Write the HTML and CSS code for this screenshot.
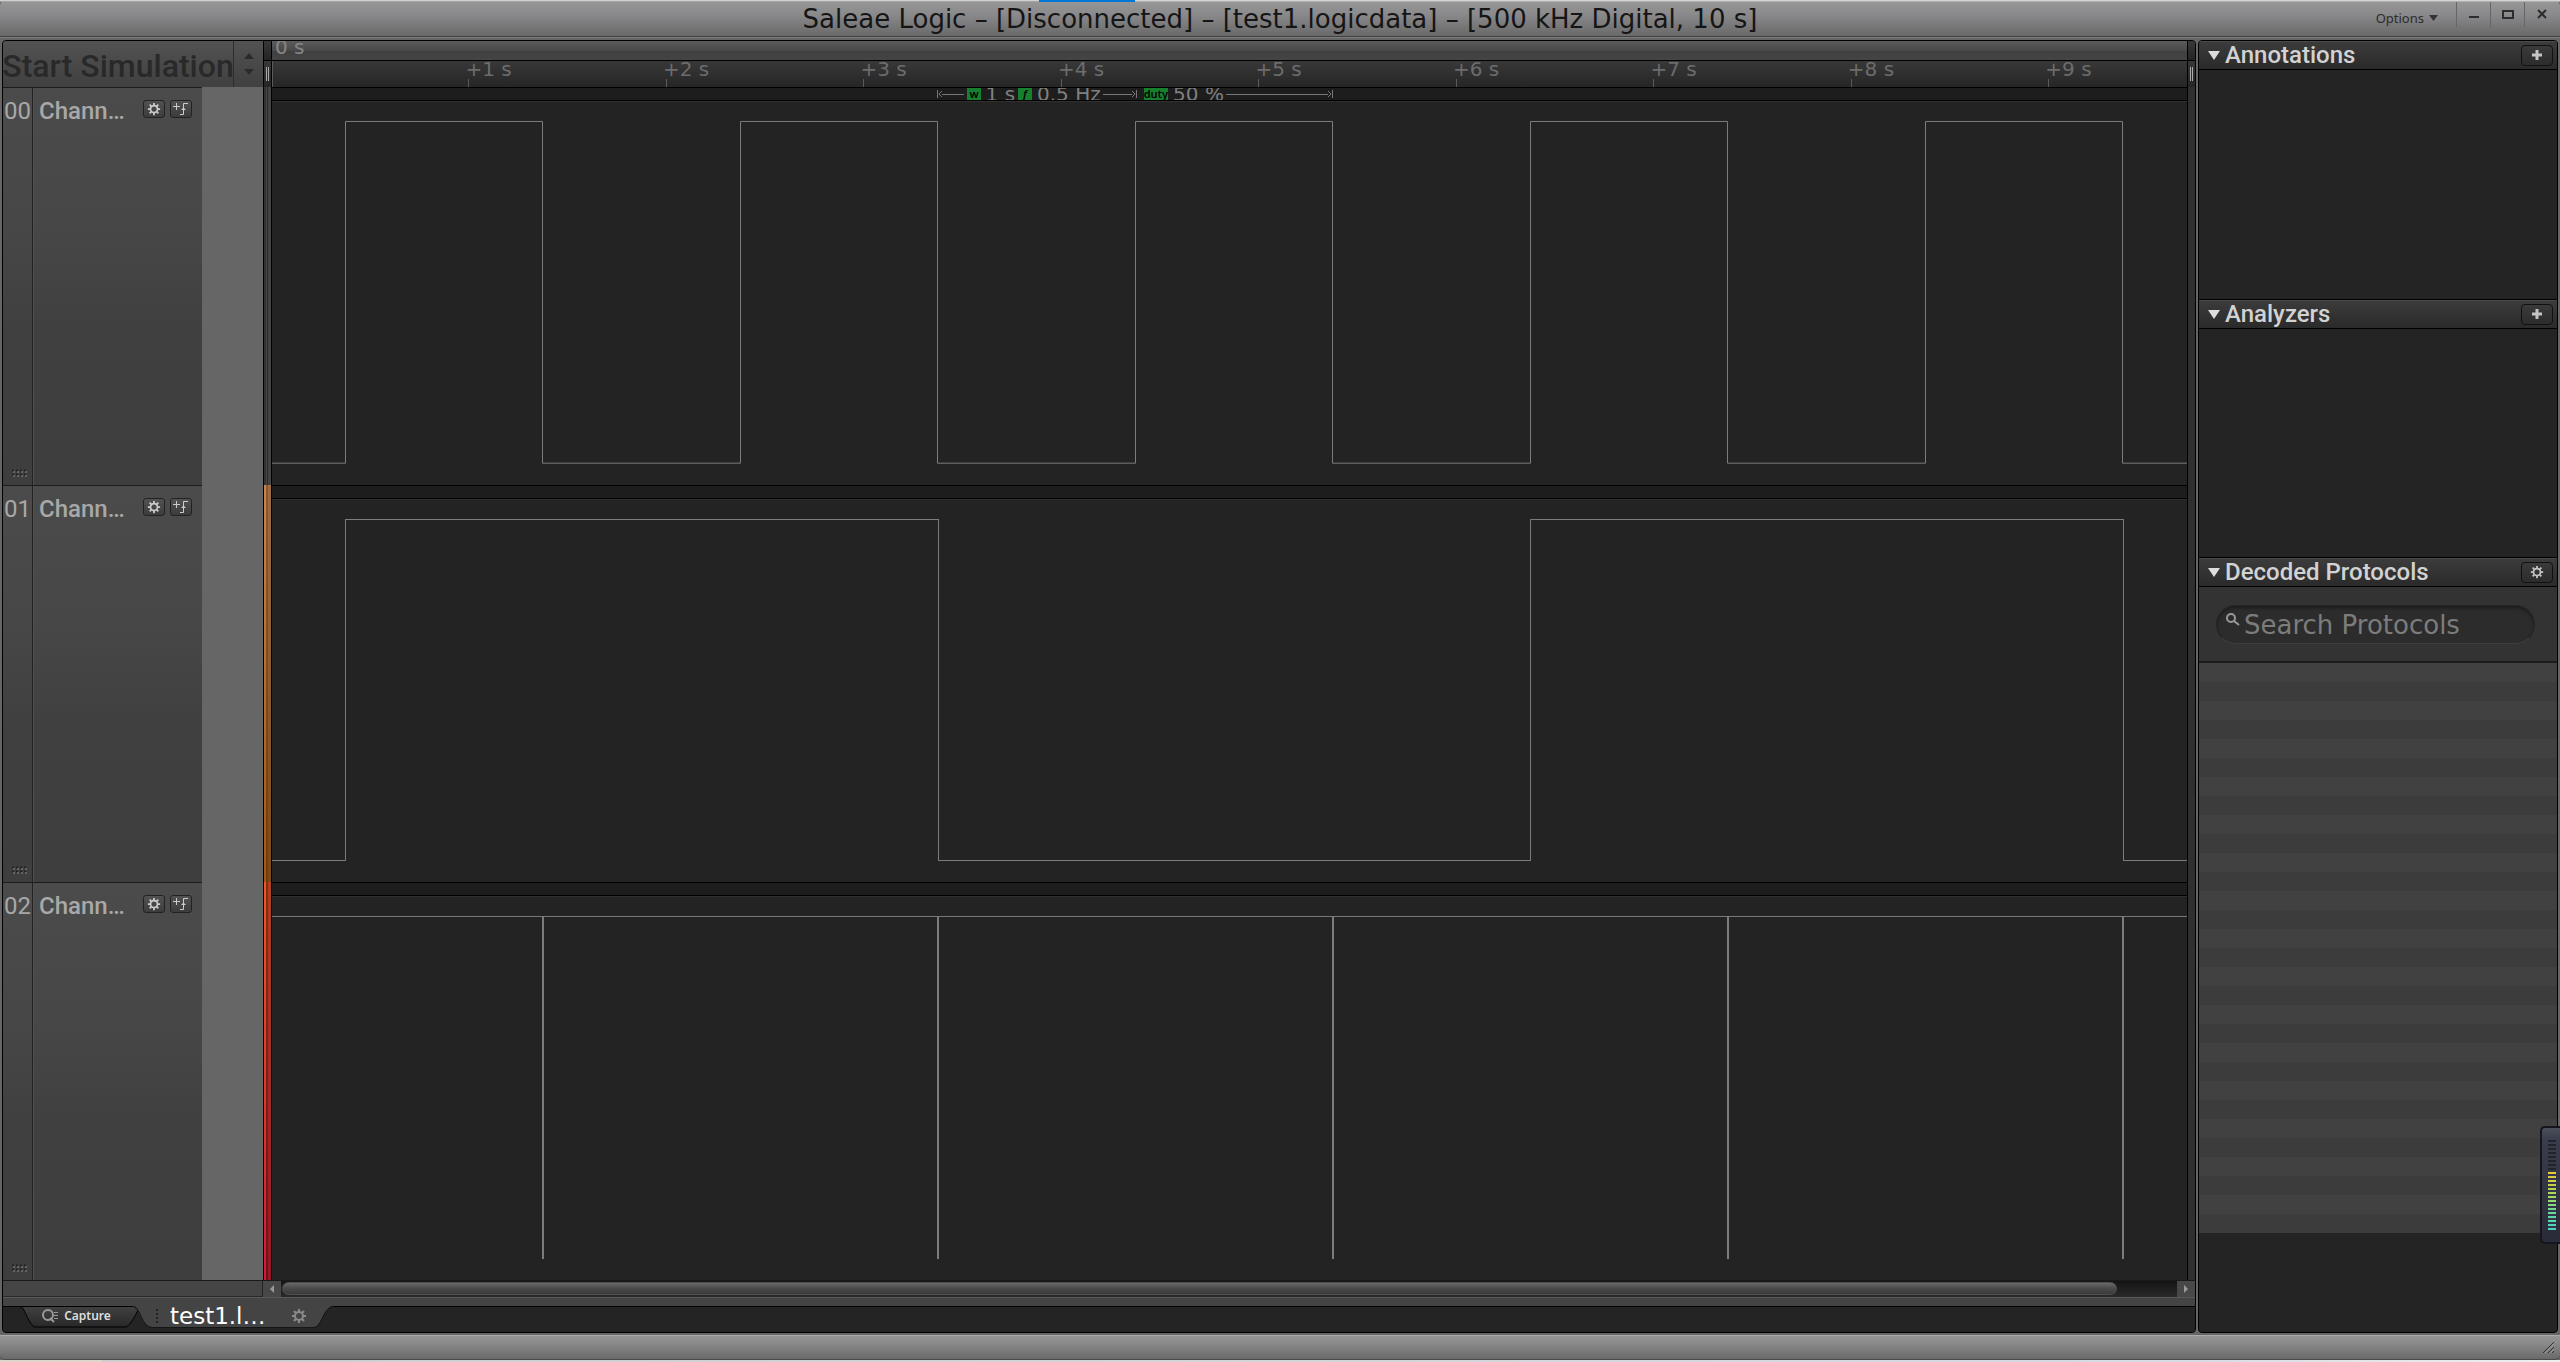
FILE: index.html
```html
<!DOCTYPE html>
<html lang="en">
<head>
<meta charset="utf-8">
<title>Saleae Logic</title>
<link rel="stylesheet" href="styles.css">
</head>
<body>
<svg class="defs" aria-hidden="true">
  <symbol id="gear" viewBox="0 0 16 16">
    <circle cx="8" cy="8" r="4" fill="none" stroke="currentColor" stroke-width="2"/>
    <path d="M8 1v3M8 12v3M1 8h3M12 8h3M3 3l2 2M11 11l2 2M13 3l-2 2M5 11l-2 2" stroke="currentColor" stroke-width="2" fill="none"/>
  </symbol>
  <symbol id="trigger" viewBox="0 0 16 14">
    <path d="M0 4.500h7M3.500 1v7M7 12.500h3.500V1.500H15M8.500 7.500h4M9.500 6.500h2" stroke="currentColor" fill="none"/>
  </symbol>
  <symbol id="plus" viewBox="0 0 12 12"><path d="M6 1v10M1 6h10" stroke="currentColor" stroke-width="3"/></symbol>
  <symbol id="grip" viewBox="0 0 16 8">
    <path d="M1 1.500h14M1 5.500h14" stroke="#222" stroke-width="2" stroke-dasharray="2 2"/>
    <path d="M2 3h14M2 7h14" stroke="#8c8c8c" stroke-width="1" stroke-dasharray="2 2"/>
  </symbol>
</svg>

<header class="titlebar">
  <div class="backdrop"><i class="b1"></i><i class="b2"></i><i class="b3"></i></div>
  <h1 class="title">Saleae Logic – [Disconnected] – [test1.logicdata] – [500 kHz Digital, 10 s]</h1>
  <div class="window-controls">
    <button class="options">Options <svg width="9" height="6" viewBox="0 0 9 6"><path d="M0 0h9L4.500 6z" fill="#333"/></svg></button>
    <button class="win" aria-label="Minimize"><svg width="12" height="12" viewBox="0 0 12 12"><path d="M1 9h10" stroke="#2c2c2c" stroke-width="2"/></svg></button>
    <button class="win" aria-label="Maximize"><svg width="12" height="12" viewBox="0 0 12 12"><path d="M1 3h10v7H1z" stroke="#2c2c2c" stroke-width="2" fill="none"/></svg></button>
    <button class="win" aria-label="Close"><svg width="12" height="12" viewBox="0 0 12 12"><path d="M2 2l8 8M10 2l-8 8" stroke="#2c2c2c" stroke-width="2"/></svg></button>
  </div>
</header>

<div class="workspace">
  <main class="panel capture">
    <div class="head">
      <div class="control simulate">
        <button class="start">Start Simulation</button>
        <button class="spin" aria-label="Simulation settings"><svg width="12" height="24" viewBox="0 0 12 24"><path d="M1 7l5-6 5 6zM1 17l5 6 5-6z" fill="#2b2b2b"/></svg></button>
      </div>
      <div class="splitter split-head"><i></i><b></b></div>
      <div class="ruler">
        <div class="origin">0 s</div>
        <div class="ticks">
          <span></span><span>+1 s</span><span>+2 s</span><span>+3 s</span><span>+4 s</span><span>+5 s</span><span>+6 s</span><span>+7 s</span><span>+8 s</span><span>+9 s</span>
        </div>
      </div>
      <div class="splitter edge split-head"><i></i><b></b></div>
    </div>

    <div class="channels">
      <section class="channel">
        <div class="control">
          <div class="num"><span>00</span><svg width="16" height="8"><use href="#grip"/></svg></div>
          <div class="name"><span>Chann…</span>
            <button class="mini" aria-label="Channel 0 settings"><svg width="14" height="14"><use href="#gear"/></svg></button>
            <button class="mini" aria-label="Channel 0 trigger"><svg width="16" height="14"><use href="#trigger"/></svg></button></div>
          <div class="meter"></div>
        </div>
        <div class="splitter c0"></div>
        <div class="wave">
          <div class="band">
            <div class="measure">
              <svg class="tip" width="5" height="8" viewBox="0 0 5 8"><path d="M.5 0v8M5 1L2 4l3 3" stroke="#777" fill="none"/></svg><i class="rule short"></i>
              <span class="badge">w</span><span class="val">1 s</span>
              <span class="badge it">f</span><span class="val">0.5 Hz</span><i class="rule"></i><svg class="tip" width="5" height="8" viewBox="0 0 5 8"><path d="M4.500 0v8M0 1l3 3-3 3" stroke="#777" fill="none"/></svg>
            </div>
            <div class="measure duty">
              <span class="badge">duty</span><span class="val">50 %</span><i class="rule"></i><svg class="tip" width="5" height="8" viewBox="0 0 5 8"><path d="M4.500 0v8M0 1l3 3-3 3" stroke="#777" fill="none"/></svg>
            </div>
          </div>
          <svg class="plot" viewBox="0 0 1915 398" preserveAspectRatio="none"><path d="M0 376.500H73.500V34.500H270.500V376.500H468.500V34.500H665.500V376.500H863.500V34.500H1060.500V376.500H1258.500V34.500H1455.500V376.500H1653.500V34.500H1850.500V376.500H1915"/></svg>
        </div>
        <div class="splitter edge"></div>
      </section>

      <section class="channel">
        <div class="control">
          <div class="num"><span>01</span><svg width="16" height="8"><use href="#grip"/></svg></div>
          <div class="name"><span>Chann…</span>
            <button class="mini" aria-label="Channel 1 settings"><svg width="14" height="14"><use href="#gear"/></svg></button>
            <button class="mini" aria-label="Channel 1 trigger"><svg width="16" height="14"><use href="#trigger"/></svg></button></div>
          <div class="meter"></div>
        </div>
        <div class="splitter c1"></div>
        <div class="wave">
          <div class="band"></div>
          <svg class="plot" viewBox="0 0 1915 398" preserveAspectRatio="none"><path d="M0 375.500H73.500V34.500H666.500V375.500H1258.500V34.500H1851.500V375.500H1915"/></svg>
        </div>
        <div class="splitter edge"></div>
      </section>

      <section class="channel">
        <div class="control">
          <div class="num"><span>02</span><svg width="16" height="8"><use href="#grip"/></svg></div>
          <div class="name"><span>Chann…</span>
            <button class="mini" aria-label="Channel 2 settings"><svg width="14" height="14"><use href="#gear"/></svg></button>
            <button class="mini" aria-label="Channel 2 trigger"><svg width="16" height="14"><use href="#trigger"/></svg></button></div>
          <div class="meter"></div>
        </div>
        <div class="splitter c2"></div>
        <div class="wave">
          <div class="band"></div>
          <svg class="plot" viewBox="0 0 1915 398" preserveAspectRatio="none"><path d="M0 34.500H1915"/><path class="pulse" d="M271 34V377M666 34V377M1061 34V377M1456 34V377M1851 34V377"/></svg>
        </div>
        <div class="splitter edge"></div>
      </section>
    </div>

    <div class="scroll-row">
      <div class="control"></div>
      <button class="arrow" aria-label="Scroll left"><svg width="6" height="10" viewBox="0 0 6 10"><path d="M5 1v8L1 5z" fill="#999"/></svg></button>
      <div class="track"><div class="thumb"></div></div>
      <button class="arrow" aria-label="Scroll right"><svg width="6" height="10" viewBox="0 0 6 10"><path d="M1 1v8l4-4z" fill="#999"/></svg></button>
    </div>
    <div class="shelf"></div>
    <nav class="tabs">
      <svg class="tab-shapes" width="340" height="24" viewBox="0 0 340 24">
        <defs><linearGradient id="cap" x2="0" y2="1"><stop offset="0" stop-color="#414141"/><stop offset="1" stop-color="#282828"/></linearGradient></defs>
        <path d="M17 .5C22 .5 23 14 31 21H123C128 19 133 8 135 4L131 .5z" fill="url(#cap)" stroke="#000"/>
        <path d="M0 .5H17M331 .5H340" stroke="#000"/>
        <path d="M129 0C137 0 138 21 149 21H311C319 21 320 0 331 0z" fill="#444"/>
        <path d="M131 0C138 3 139 21.500 149 21.500H311C319 21.500 320 .5 331 .5" stroke="#161616" fill="none"/>
      </svg>
      <button class="tab small"><svg width="18" height="14" viewBox="0 0 18 14"><circle cx="7" cy="6" r="5" stroke="#999" stroke-width="2" fill="none"/><path d="M9 9l4 4" stroke="#999" stroke-width="2"/><path d="M13 3.500h4M13 6.500h4M13 9.500h4" stroke="#999"/></svg>Capture</button>
      <button class="tab active"><svg width="3" height="14" viewBox="0 0 3 14"><path d="M1 0v14" stroke="#222" stroke-width="2" stroke-dasharray="2 2"/></svg><span>test1.l…</span><svg class="tab-gear" width="16" height="16"><use href="#gear"/></svg></button>
    </nav>
  </main>

  <aside class="panel side">
    <section class="group"><h2><i class="tri"></i>Annotations<button class="act" aria-label="Add annotation"><svg width="12" height="12"><use href="#plus"/></svg></button></h2></section>
    <section class="group"><h2><i class="tri"></i>Analyzers<button class="act" aria-label="Add analyzer"><svg width="12" height="12"><use href="#plus"/></svg></button></h2></section>
    <section class="group decoded"><h2><i class="tri"></i>Decoded Protocols<button class="act" aria-label="Protocol settings"><svg width="14" height="14"><use href="#gear"/></svg></button></h2>
      <div class="search">
        <label class="pill"><svg width="14" height="14" viewBox="0 0 14 14"><circle cx="5" cy="5" r="4" fill="none" stroke="#999" stroke-width="2"/><path d="M8 8l5 4" stroke="#999" stroke-width="2"/></svg><input type="text" placeholder="Search Protocols" aria-label="Search Protocols"></label>
      </div>
      <div class="list"></div>
    </section>
  </aside>
</div>

<footer class="status"><svg width="12" height="12" viewBox="0 0 12 12"><path d="M0 11L11 0M5 11l6-6M9 11l2-2" stroke="#333" stroke-width="1"/><path d="M2 11l9-9M7 11l4-4" stroke="#999"/></svg></footer>
<div class="floor"></div>

<div class="levels"><div class="off"></div><div class="on"></div></div>
</body>
</html>
```
FILE: styles.css
```css
* { box-sizing: border-box; }
html, body { height: 100%; }
body {
  margin: 0; display: flex; flex-direction: column; overflow: hidden;
  background: #666; color: #ccc; font-family: Roboto, sans-serif;
}
button { border: 0; padding: 0; margin: 0; background: none; color: inherit; font: inherit; display: flex; align-items: center; justify-content: center; }
i { display: block; }
svg { flex: none; display: block; }
.defs { position: absolute; width: 0; height: 0; }

.titlebar {
  height: 37px; flex: none; position: relative; display: grid;
  grid-template-columns: 1fr auto 1fr;
  background: linear-gradient(#989898, #8a8a8c 40%, #696969);
  border-bottom: 1px solid #404040; border-radius: 6px 6px 0 0;
}
.backdrop { position: absolute; inset: 0 0 auto; height: 2px; display: flex; }
.b1 { width: 40.6%; background: linear-gradient(#ccd0cf 50%, #a4a6a6 50%); }
.b2 { width: 3.75%; background: #0078d7; }
.b3 { flex: 1; background: linear-gradient(#d4d4d4 50%, #b0b0b0 50%); }
.title {
  grid-column: 2; margin: 0; color: #151515; white-space: nowrap;
  font: 400 26px/38px "DejaVu Sans", sans-serif;
}
.window-controls { display: flex; justify-content: flex-end; height: 27px; padding-right: 2px; }
.options { gap: 5px; margin-right: 18px; padding-top: 8px; color: #2c2c2c; font: 13px/18px "Noto Sans", sans-serif; }
.win { width: 34px; border-left: 1px solid #666; }

.workspace { flex: 1; min-height: 0; display: flex; gap: 2px; padding: 2px; border-top: 1px solid #7c7c7c; }
.panel { border: 1px solid #000; border-radius: 4px; overflow: hidden; background: #242424; display: flex; flex-direction: column; }
.capture { flex: 1; min-width: 0; }
.side { width: 360px; flex: none; }

.control { width: 260px; flex: none; display: flex; }
.splitter { width: 9px; flex: none; border: solid #000; border-width: 0 1px; background: linear-gradient(90deg, #333 2px, #454545 2px 3px, #2a2a2a 3px 4px, #444 4px); }
.edge { width: 8px; border-right: 0; background: #2f2f2f; }

.head { height: 46px; flex: none; display: flex; }
.simulate { background: linear-gradient(#525252, #404040); }
.start { width: 231px; color: #292929; font-size: 32px; font-weight: 500; line-height: 42px; white-space: nowrap; border-right: 1px solid #2d2d2d; padding-top: 4px; }
.spin { flex: 1; }
.split-head { background: linear-gradient(#383838, #242424 19px, #000 19px 20px, #383838 20px, #262626); }
.split-head i { height: 26px; }
.split-head b { display: block; width: 3px; height: 14px; margin: 0 auto; border: solid #aaa; border-width: 0 1px; }
.ruler { flex: 1; min-width: 0; font: 20px/20px "DejaVu Sans", sans-serif; }
.origin { height: 20px; padding: 0 3px; color: #868686; border-bottom: 1px solid #000; background: linear-gradient(#5c5c5c, #494949 50%, #404040 50%, #444); line-height: 12px; }
.ticks { height: 26px; display: flex; color: #6c6c6c; background: linear-gradient(#383838, #262626); }
.ticks span { width: 10.313%; flex: none; white-space: nowrap; line-height: 16px; text-indent: -3px; background: linear-gradient(#5a5a5a, #5a5a5a) 0 100% / 1px 8px no-repeat; }
.ticks span:first-child { background-size: 1px 100%; width: 10.26%; }
.ticks span:last-child { flex: 1; }

.channels { flex: 1; min-height: 0; display: grid; grid-template-rows: repeat(3, 1fr); }
.channel { display: flex; min-height: 0; }
.channel .control { border-top: 1px solid #1c1c1c; background: linear-gradient(#4b4b4b, #474747 35%, #404040 60%, #3e3e3e); }
.num { width: 30px; border-right: 1px solid #222; display: flex; flex-direction: column; justify-content: space-between; align-items: center; padding: 8px 0 8px; color: #a8a8a8; font-size: 24px; line-height: 30px; }
.num svg { margin-left: 2px; }
.name { flex: 1; display: flex; align-items: flex-start; gap: 5px; padding: 8px 10px 0 5px; border-left: 1px solid #505050; color: #a8a8a8; font-size: 24px; line-height: 30px; }
.name span { flex: 1; font-weight: 500; }
.mini { width: 22px; height: 18px; margin-top: 4px; color: #ccc; border: 1px solid #222; border-radius: 3px; background: linear-gradient(#525252, #3c3c3c); }
.meter { width: 61px; background: #666; margin-top: -1px; }
.c1 { background: linear-gradient(90deg, transparent 2px, #0005 2px 4px, #0003 4px), linear-gradient(#c98550, #a05a18); }
.c2 { background: linear-gradient(90deg, transparent 2px, #0007 2px 4px, #0004 4px), linear-gradient(#f25528, #d01c36); }
.wave { flex: 1; min-width: 0; position: relative; border-top: 1px solid #000; background: #232323; }
.band { height: 13px; overflow: hidden; display: flex; background: #1d1d1d; border-bottom: 1px solid #000; box-shadow: 0 1px #303030; }
.plot { position: absolute; inset: -1px 0 0; width: 100%; height: calc(100% + 1px); }
.plot path { fill: none; stroke: #7c7c7c; stroke-width: 1; vector-effect: non-scaling-stroke; shape-rendering: crispEdges; }
.plot .pulse { stroke-width: 2; }
.measure { width: 10.3%; margin-left: 34.75%; display: flex; align-items: center; color: #808080; font: 20px/12px "DejaVu Sans", sans-serif; white-space: nowrap; }
.duty { margin-left: 9px; width: 9.8%; }
.rule { flex: 1; height: 1px; background: #777; margin-left: 2px; }
.tip { margin-right: -2px; }
.rule.short { flex: none; width: 22px; }
.badge { margin-left: 3px; padding: 0 2px; background: #17802f; color: #000; font: 600 11px/12px "Noto Sans", sans-serif; }
.duty .badge { margin-left: 0; padding: 0; }
.badge.it { font-style: italic; padding: 0 5px; }
.val { margin-left: 5px; }

.scroll-row { height: 17px; flex: none; display: flex; border-top: 1px solid #1a1a1a; background: #454545; }
.scroll-row .control { border-right: 1px solid #222; border-bottom: 1px solid #2a2a2a; }
.arrow { width: 18px; background: #484848; }
.track { flex: 1; padding: 1px 60px 2px 1px; background: linear-gradient(#141414, #2a2a2a); }
.thumb { height: 13px; border-radius: 7px; background: linear-gradient(#686868, #4a4a4a 50%, #3a3a3a); border: 1px solid #505050; }
.shelf { height: 9px; flex: none; background: #444; border-top: 1px solid #5a5a5a; }
.tabs { height: 26px; flex: none; position: relative; display: flex; align-items: flex-start; background: #242424; box-shadow: inset 0 1px #000; }
.tab-shapes { position: absolute; left: 0; top: 0; }
.tab { position: relative; height: 20px; white-space: nowrap; }
.small { margin-left: 35px; width: 76px; gap: 5px; color: #ddd; font: 600 12px/18px "Noto Sans", sans-serif; }
.active { margin-left: 42px; gap: 11px; color: #fff; font: 23px/22px "DejaVu Sans", sans-serif; }
.tab-gear { color: #8a8a8a; margin-left: 14px; }

.group { height: 258px; flex: none; }
.group + .group { border-top: 1px solid #000; }
.decoded { flex: 1; height: auto; min-height: 0; }
.group h2 { margin: 0; height: 29px; display: flex; align-items: center; color: #d2d2d2; font-size: 24px; font-weight: 500; line-height: 28px; padding: 0 4px 0 9px; border-bottom: 1px solid #000; background: linear-gradient(#3c3c3c, #2a2a2a); box-shadow: inset 0 1px #4a4a4a; }
.tri { border: 6px solid transparent; border-top: 9px solid #ddd; border-bottom: 0; margin-right: 5px; }
.act { margin-left: auto; width: 32px; height: 21px; border: 1px solid #111; border-radius: 4px; background: linear-gradient(#3a3a3a, #2c2c2c); color: #c4c4c4; }
.search { height: 76px; padding: 18px 22px 0 17px; background: #333; border-bottom: 2px solid #1c1c1c; }
.pill { display: flex; height: 39px; padding: 0 20px 0 9px; border: 1px solid #252525; border-bottom-color: #3e3e3e; border-radius: 20px; background: #2c2c2c; box-shadow: inset 0 2px 3px #1c1c1c; }
.pill svg { margin-top: 7px; }
.pill input { flex: 1; min-width: 0; border: 0; outline: 0; padding: 1px 0 0 4px; background: none; color: #ccc; font: 26px/36px "DejaVu Sans", sans-serif; }
.pill input::placeholder { color: #7c7c7c; opacity: 1; }
.list { height: 570px; background: repeating-linear-gradient(#414141 0 19px, #3c3c3c 19px 38px); }

.status { height: 25px; flex: none; display: flex; justify-content: flex-end; align-items: center; padding-right: 5px; background: linear-gradient(#959595, #8b8b8d 30%, #696969); border-top: 1px solid #aaa; border-bottom: 1px solid #4a4a4a; border-radius: 0 0 5px 5px; }
.floor { height: 2px; flex: none; background: linear-gradient(90deg, #ded5cc 4%, #ccc 4%, #d4dce4 85%, #eee); }

.levels { position: absolute; right: 0; bottom: 118px; width: 20px; height: 118px; padding: 12px 4px 0 6px; border: 2px solid #15151f; border-right: 0; border-radius: 5px 0 0 5px; background: linear-gradient(#4a505c, #3a3d4c 10%, #292b38); }
.off { height: 32px; background: repeating-linear-gradient(#22242c 0 2px, transparent 2px 4px); }
.on { height: 58px; background: repeating-linear-gradient(transparent 0 2px, #33354a 2px 4px), linear-gradient(#e8c834, #a8d858 40%, #60d8a0 75%, #48d4c0); }
```
